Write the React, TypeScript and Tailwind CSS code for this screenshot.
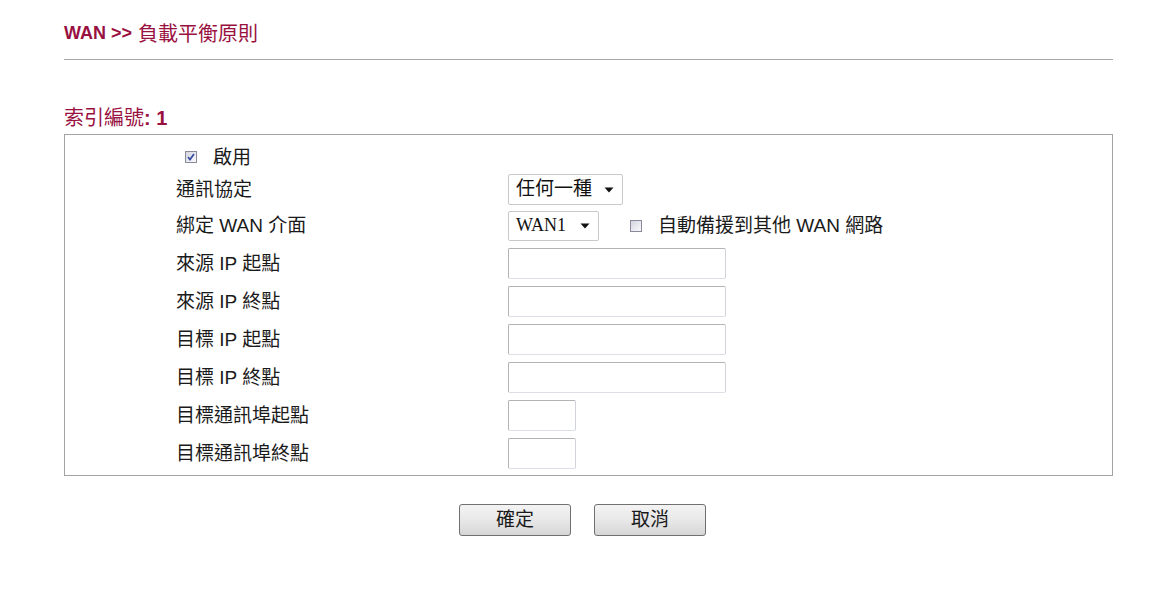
import React from "react";

const cjk = "font-['Liberation_Sans','Noto_Sans_CJK_TC',sans-serif]";

function CheckBox({ checked }: { checked?: boolean }) {
  return (
    <span className="inline-flex h-[12px] w-[12px] shrink-0 items-center justify-center border border-[#8a8a9a] bg-gradient-to-br from-[#d4d4e0] to-[#fafafc]">
      {checked && (
        <svg width="10" height="10" viewBox="0 0 10 10">
          <path d="M2 5 L4 7.5 L8 2" fill="none" stroke="#34499f" strokeWidth="1.7" />
        </svg>
      )}
    </span>
  );
}

function Caret() {
  return (
    <svg width="10" height="6" viewBox="0 0 10 6" className="shrink-0">
      <path d="M0.5 0.5 H9.5 L5 5.5 Z" fill="#111" />
    </svg>
  );
}

function TextBox({ small }: { small?: boolean }) {
  return (
    <div
      className={`h-[31px] ${small ? "w-[68px]" : "w-[218px]"} rounded-[2px] border border-[#b3b3b3] border-b-[#dcdfe6] border-r-[#d0d3da] bg-white`}
    />
  );
}

function Row({ label, h, children }: { label: React.ReactNode; h: string; children?: React.ReactNode }) {
  return (
    <div className={`flex items-center ${h}`}>
      <div className="w-[443px] pl-[111px] text-[19px] leading-none text-[#1a1a1a]">{label}</div>
      <div className="flex items-center">{children}</div>
    </div>
  );
}

export default function App() {
  return (
    <div className={`min-h-[603px] w-[1159px] bg-white ${cjk}`}>
      <div className="ml-[64px] w-[1049px]">
        <div className="flex h-[59px] items-center pt-[8px] text-[#99113f]">
          <span className="text-[18px] font-bold">WAN &gt;&gt;</span>
          <span className="ml-[6px] text-[20px]">負載平衡原則</span>
        </div>
        <div className="h-px bg-[#a8a8a8]" />

        <div className="mt-[43px] flex h-[30px] items-center text-[#99113f]">
          <span className="text-[20px]">索引編號</span>
          <span className="text-[20px] font-bold">: 1</span>
        </div>

        <div className="mt-[1px] border border-[#a3a3a3] pt-[7px] pb-[3px]">
          <div className="flex h-[30px] items-center pl-[120px]">
            <CheckBox checked />
            <span className="ml-[16px] text-[19px] leading-none text-[#1a1a1a]">啟用</span>
          </div>
          <Row label="通訊協定" h="h-[35px]">
            <div className="flex h-[31px] w-[115px] items-center justify-between rounded-[2px] border border-[#c9c9c9] bg-white pl-[7px] pr-[8px] text-[19px] text-[#111]">
              <span>任何一種</span>
              <Caret />
            </div>
          </Row>
          <Row label="綁定 WAN 介面" h="h-[37px]">
            <div className="flex h-[30px] w-[91px] items-center justify-between rounded-[2px] border border-[#c9c9c9] bg-white pl-[7px] pr-[8px] font-['Liberation_Serif',serif] text-[18px] text-[#111]">
              <span>WAN1</span>
              <Caret />
            </div>
            <span className="ml-[31px] flex">
              <CheckBox />
            </span>
            <span className="ml-[16px] text-[19px] leading-none text-[#1a1a1a]">自動備援到其他 WAN 網路</span>
          </Row>
          <Row label="來源 IP 起點" h="h-[38px]">
            <TextBox />
          </Row>
          <Row label="來源 IP 終點" h="h-[38px]">
            <TextBox />
          </Row>
          <Row label="目標 IP 起點" h="h-[38px]">
            <TextBox />
          </Row>
          <Row label="目標 IP 終點" h="h-[38px]">
            <TextBox />
          </Row>
          <Row label="目標通訊埠起點" h="h-[38px]">
            <TextBox small />
          </Row>
          <Row label="目標通訊埠終點" h="h-[38px]">
            <TextBox small />
          </Row>
        </div>

        <div className="mt-[28px] flex gap-[23px] pl-[395px]">
          {["確定", "取消"].map((t) => (
            <button
              key={t}
              className="h-[32px] w-[112px] rounded-[3px] border border-[#707070] bg-gradient-to-b from-[#f3f3f3] via-[#e8e8e8] to-[#d6d6d6] text-[19px] text-[#1a1a1a]"
            >
              {t}
            </button>
          ))}
        </div>
      </div>
    </div>
  );
}
